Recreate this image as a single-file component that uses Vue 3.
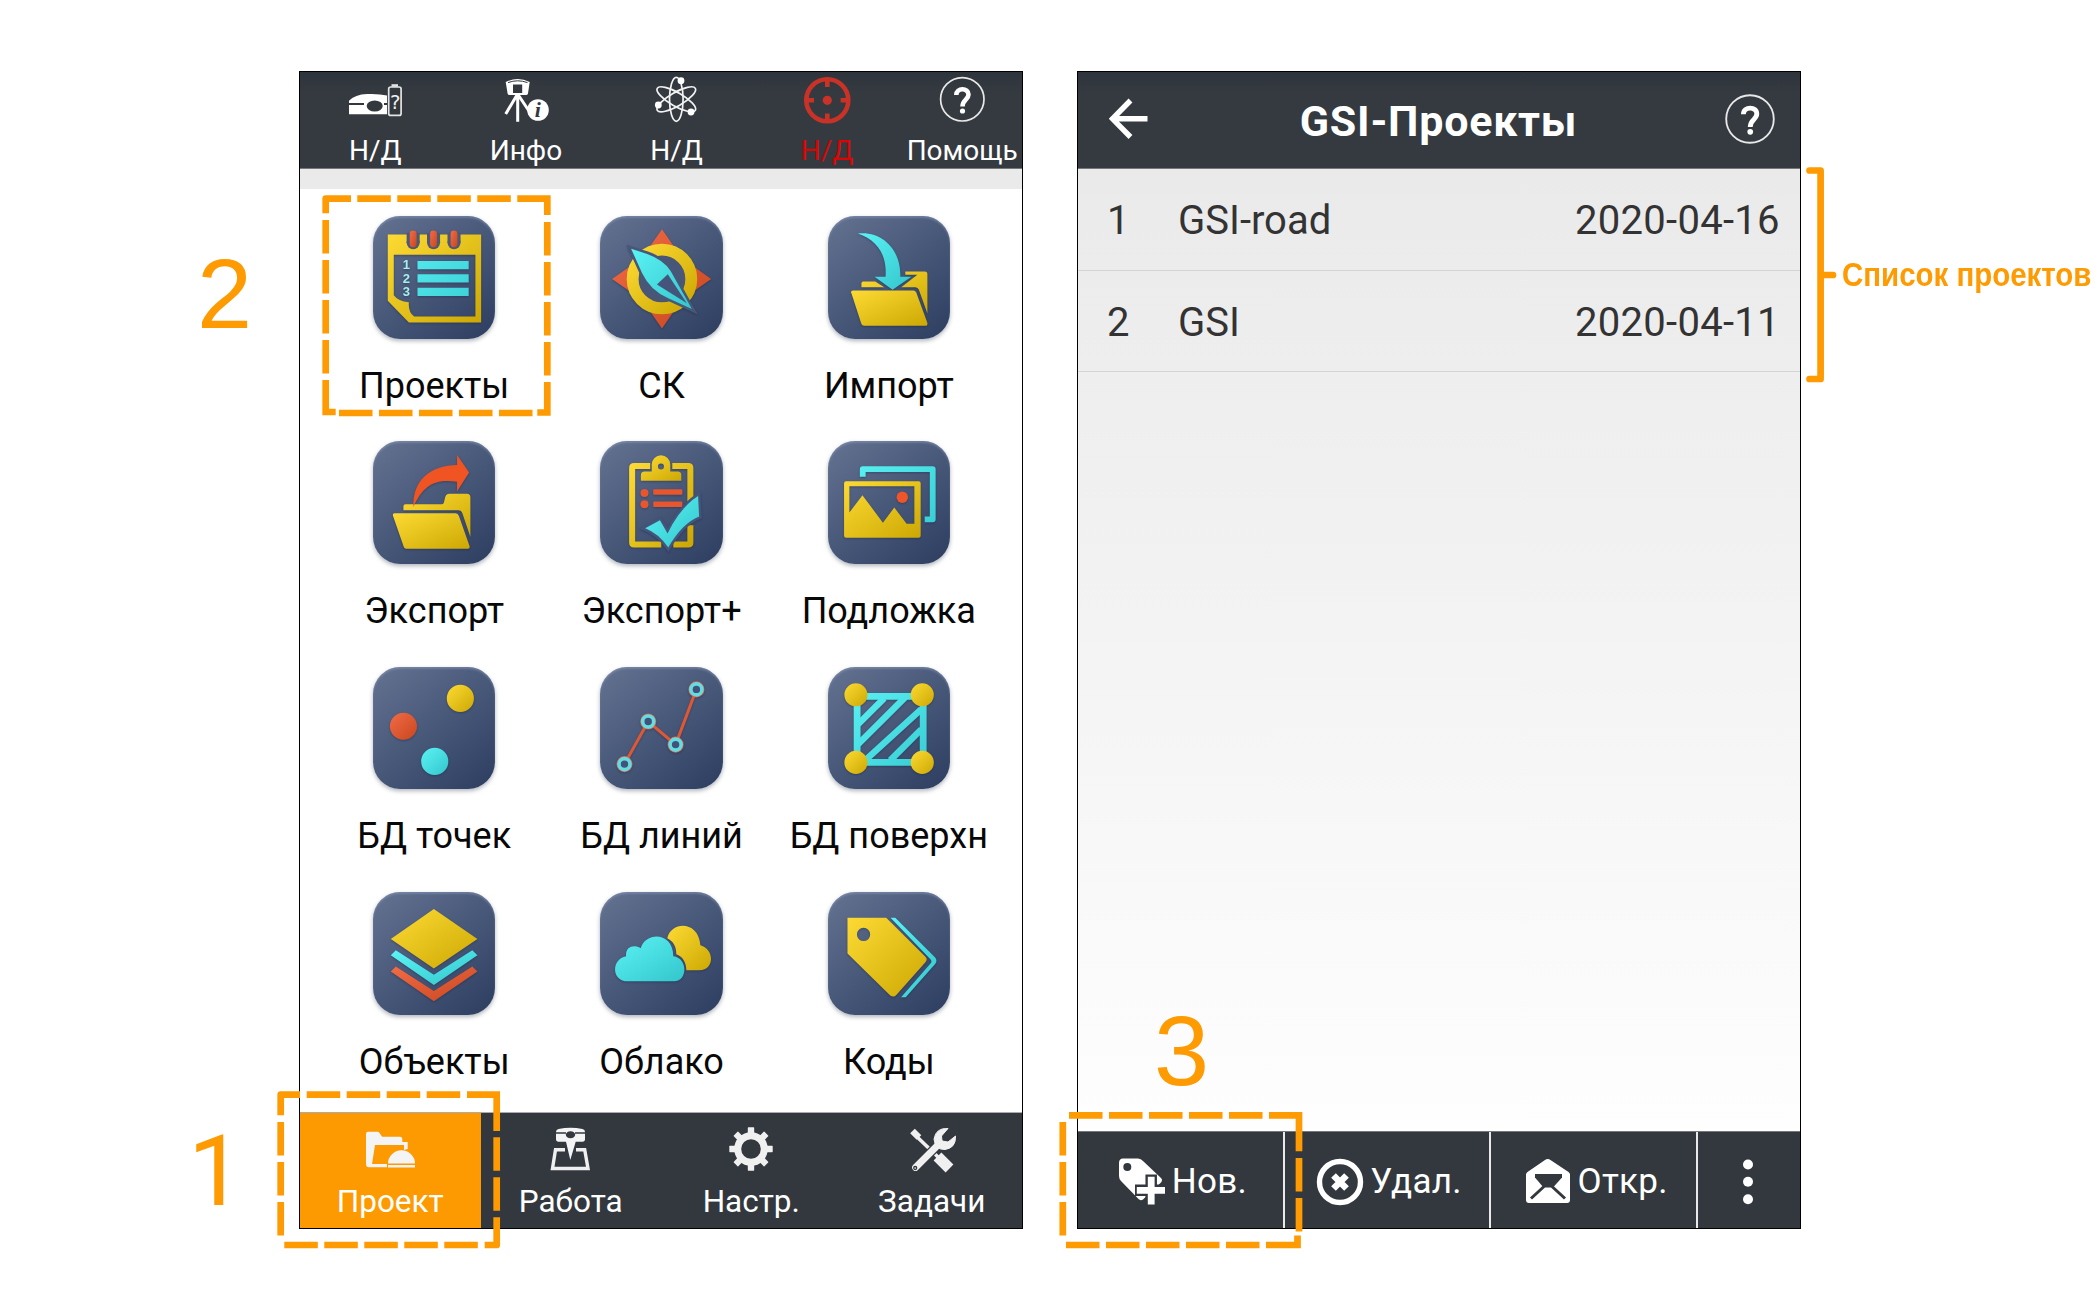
<script setup>
const apps = [
  ['notebook', 'Проекты'], ['compass', 'СК'], ['import', 'Импорт'],
  ['export', 'Экспорт'], ['clipboard', 'Экспорт+'], ['picture', 'Подложка'],
  ['points', 'БД точек'], ['lines', 'БД линий'], ['surface', 'БД поверхн'],
  ['layers', 'Объекты'], ['cloud', 'Облако'], ['tag', 'Коды'],
]
const projects = [
  { n: 1, name: 'GSI-road', date: '2020-04-16' },
  { n: 2, name: 'GSI', date: '2020-04-11' },
]
const teeth = [0, 45, 90, 135, 180, 225, 270, 315]
const nodes = [[24.4, 96.7], [48, 54.3], [75.3, 77.3], [96, 22.3]]

// dashed runs of the highlight frames, then their solid corner pieces
const dashes = [
  'M357.3 198.7H511', 'M547.3 222V375.5', 'M339 413H532.5', 'M325.7 220V373.5',
  'M306.7 1094.7H460.3', 'M496.7 1137.3V1211', 'M284.3 1245H478', 'M280.7 1122V1235.5',
  'M1069 1115.3H1262.5', 'M1299 1158V1231.5', 'M1066 1245H1259.5', 'M1062.8 1122V1235.5',
]
const roundCorners = ['M325.7 213.3V198.7H351', 'M280.7 1115.3V1094.7H300', 'M496.7 1217.3V1245H484.7']
const squareCorners = [
  'M547.3 215V198.7H517.3', 'M547.3 382V412.5H537.3', 'M325.7 380V412H335.7',
  'M467 1094.7H496.7V1131', 'M1269 1115.3H1299V1151.3', 'M1266 1245H1297.5V1235.5',
]
</script>

<template>
  <div class="page">
    <div class="phones">
      <section class="phone">
        <header class="status">
          <div class="stat">
            <svg width="60" height="50" viewBox="0 0 60 50">
              <path d="M4 25.7Q10 19.5 22 19Q34 18.5 42 20.5V39.3H4Z" fill="#fff" />
              <path d="M4 29H19M39 29H42" stroke="#32383e" stroke-width="2" />
              <ellipse cx="29.7" cy="31" rx="8" ry="5.6" fill="#32383e" />
              <rect x="43.7" y="12" width="12.4" height="28.4" rx="2" fill="#32383e" stroke="#e4e4e4" stroke-width="1.7" />
              <path d="M46.5 10.5H53" stroke="#e4e4e4" stroke-width="2.6" />
              <text x="50" y="33.5" class="mono" font-size="20" fill="#eee" text-anchor="middle">?</text>
            </svg>
            <span>Н/Д</span>
          </div>
          <div class="stat">
            <svg width="60" height="50" viewBox="0 0 60 50">
              <path d="M9.7 7Q21.7 1 33.7 7L32 18.5Q31.5 20 30 20H13.5Q12 20 11.6 18.5Z" fill="#fff" />
              <path d="M12 7.6Q21.7 4 31.5 7.6" stroke="#32383e" fill="none" />
              <rect x="17" y="9.5" width="9.2" height="8.5" fill="#32383e" />
              <path d="M21 20L9.7 39M21.7 20V46.7M22.3 20L33 36" stroke="#fff" stroke-width="3" fill="none" />
              <circle cx="42" cy="35" r="10.8" fill="#fff" />
              <text x="41.8" y="42" class="serif" font-size="22" fill="#32383e" text-anchor="middle">i</text>
            </svg>
            <span>Инфо</span>
          </div>
          <div class="stat">
            <svg width="60" height="50" viewBox="0 0 60 50">
              <g fill="none" stroke="#f2f2f2" stroke-width="1.7">
                <ellipse v-for="a in [0, 60, 120]" :key="a" cx="30.3" cy="24.3" rx="6.8" ry="22" :transform="`rotate(${a} 30.3 24.3)`" />
              </g>
              <g fill="#fff"><circle cx="35" cy="5.7" r="3.4" /><circle cx="12.3" cy="30" r="3.4" /><circle cx="45" cy="37" r="3.4" /></g>
            </svg>
            <span>Н/Д</span>
          </div>
          <div class="stat alert">
            <svg width="60" height="50" viewBox="0 0 60 50">
              <g fill="none" stroke="#c93226" stroke-width="4.6">
                <circle cx="30.3" cy="25.3" r="21" />
                <path d="M30.3 4V12M30.3 38.6V47M9 25.3H17M43.6 25.3H52" />
              </g>
              <circle cx="30.3" cy="25.3" r="4.6" fill="#c93226" />
            </svg>
            <span>Н/Д</span>
          </div>
          <div class="stat last">
            <svg width="60" height="50" viewBox="0 0 60 50">
              <circle cx="30.3" cy="24.3" r="21.7" fill="none" stroke="#e8e8e8" stroke-width="1.7" />
              <path d="M24.3 20C24.3 12.5 36.5 12.5 36.5 19.6C36.5 25 30.5 24.5 30.5 31.5" fill="none" stroke="#fff" stroke-width="4.6" />
              <circle cx="30.5" cy="36" r="2.6" fill="#fff" />
            </svg>
            <span>Помощь</span>
          </div>
        </header>
        <div class="strip"></div>

        <main class="grid">
          <div v-for="[icon, label] in apps" :key="icon" class="app">
            <svg class="tile" viewBox="0 0 122 122">
              <defs>
                <linearGradient id="y" x1="0" y1="0" x2="1" y2="1"><stop offset="0" stop-color="#fdda33" /><stop offset="1" stop-color="#cda804" /></linearGradient>
                <linearGradient id="c" x1="0" y1="0" x2="1" y2="1"><stop offset="0" stop-color="#5bf3f5" /><stop offset="1" stop-color="#33c6cc" /></linearGradient>
                <linearGradient id="r" x1="0" y1="0" x2="1" y2="1"><stop offset="0" stop-color="#f26c46" /><stop offset="1" stop-color="#c8461f" /></linearGradient>
                <linearGradient id="cu" gradientUnits="userSpaceOnUse" x1="20" y1="20" x2="100" y2="100"><stop offset="0" stop-color="#5bf3f5" /><stop offset="1" stop-color="#38ccd2" /></linearGradient>
              </defs>
              <g class="glyph">
                <template v-if="icon === 'notebook'">
                  <path fill="url(#y)" fill-rule="evenodd" d="M14.7 18.3H107.7V106H35.7L14.7 84.3ZM20.7 38.7V79Q25 85 35.7 86Q35 96 41 100H102V38.7Z" />
                  <g v-for="x in [40, 60.3, 80.7]" :key="x">
                    <path :d="`M${x} 17V27`" stroke="#4b5979" stroke-width="13" />
                    <circle :cx="x" cy="26.5" r="6.5" fill="#4b5979" />
                    <rect :x="x - 3.4" y="14.5" width="6.8" height="16.5" rx="3.4" fill="url(#r)" />
                  </g>
                  <path d="M44.3 48.9H95.3M44.3 62.2H95.3M44.3 75.5H95.3" stroke="url(#cu)" stroke-width="8.3" />
                  <g class="num" fill="#a5f0ee" font-size="13"><text x="29.6" y="53">1</text><text x="29.6" y="66.8">2</text><text x="29.6" y="80">3</text></g>
                </template>
                <template v-else-if="icon === 'compass'">
                  <path fill="url(#r)" d="M61.7 13.3L77 35H46.4ZM110.7 62.7L89 78V47.4ZM61.7 112L46.4 90H77ZM12 62.7L34 47.4V78Z" />
                  <circle cx="61.7" cy="62.7" r="29.2" fill="#485777" stroke="url(#y)" stroke-width="11.8" />
                  <path d="M31 32.7L47 37.8Q64 44 70.5 55L91.5 92.7L68 82Q50 74 42 57Z" fill="url(#c)" stroke="#485777" stroke-width="5" paint-order="stroke" />
                  <path d="M56.7 68.3L67.5 58L86.5 87Z" fill="#45547a" />
                </template>
                <template v-else-if="icon === 'import'">
                  <path fill="url(#y)" d="M33.3 71V67Q33.3 65.3 35 65.3H47L56 71ZM77 55.3H96.5Q99 55.3 99 58V97L90.5 73.5Q89.5 71 87 71H73L89 58.5H77Z" />
                  <path fill="url(#y)" d="M25 74.3H85Q87 74.3 88 76.5L99 106.5Q99.5 109.3 97 109.3H36Q34 109.3 33.3 107.5L23 76Q22.7 74.3 25 74.3Z" />
                  <path fill="url(#c)" d="M29.7 17.5C52 14.5 73 32 72 60.5H83L64.3 73.5L46.3 60.5H57.3C59 39 49 24 29.7 17.5Z" />
                </template>
                <template v-else-if="icon === 'export'">
                  <path fill="url(#y)" d="M30.3 69V65Q30.3 63 32.3 63H68.5Q70.3 63 70.7 61L72 55.5Q73 52.5 76 52.5H93.5Q97 52.5 97 56V95.5L89 72Q88 69 85 69Z" />
                  <path fill="url(#y)" d="M21.5 72H82.5Q84.5 72 85.5 74.5L96.3 105Q96.5 107.3 94.5 107.3H33Q31.3 107.3 30.7 105.5L19.7 74Q19.5 72 21.5 72Z" />
                  <path fill="#f05423" d="M40.3 65.7C39 40 57 24 83.7 24V14L95.7 31.3L83.7 50.3V40.7C62 37.5 50 44 40.3 65.7Z" />
                </template>
                <template v-else-if="icon === 'clipboard'">
                  <path fill="none" stroke="url(#y)" stroke-width="6" d="M50 25H34Q32 25 32 27V101Q32 103 34 103H61M72 25H88Q90 25 90 27V60M90 84V101Q90 103 88 103H73" />
                  <path fill="url(#y)" fill-rule="evenodd" d="M40.7 39.7V34Q40.7 30.3 44.5 30.3H51.5V23.5A9.2 9.2 0 0 1 70 23.5V30.3H77.5Q81 30.3 81 34V39.7ZM63.7 25.3A3 3 0 1 0 57.7 25.3A3 3 0 1 0 63.7 25.3Z" />
                  <g fill="#e8562e"><circle cx="44.3" cy="51.7" r="4" /><circle cx="44.3" cy="62.9" r="4" /><rect x="53" y="48" width="29" height="5.5" rx="1" /><rect x="53" y="60.2" width="29" height="5.5" rx="1" /></g>
                  <path d="M45 87L59.7 79L67.3 92Q80 66 97.7 54.7L98.7 75.3Q82 82 68 106Q58 92 45 87Z" fill="url(#c)" stroke="#45547a" stroke-width="5" paint-order="stroke" />
                </template>
                <template v-else-if="icon === 'picture'">
                  <path fill="none" stroke="url(#cu)" stroke-width="5.8" stroke-linejoin="round" d="M34.6 35.7V28H104.3V78H96.3" />
                  <path fill="url(#y)" fill-rule="evenodd" d="M18 40H90.3Q92.3 40 92.3 42V94.3Q92.3 96.3 90.3 96.3H18Q16 96.3 16 94.3V42Q16 40 18 40ZM21.3 45V71.3L34.3 54L54.7 81.3L66 66.3L78.3 82.3H86V45Z" />
                  <circle cx="74" cy="56" r="5.7" fill="#ee5528" />
                </template>
                <template v-else-if="icon === 'points'">
                  <circle cx="87" cy="31.3" r="13.5" fill="url(#y)" /><circle cx="30.3" cy="59" r="13.5" fill="url(#r)" /><circle cx="61.5" cy="94" r="13.5" fill="url(#c)" />
                </template>
                <template v-else-if="icon === 'lines'">
                  <path d="M24.4 96.7L48 54.3L75.3 77.3L96 22.3" fill="none" stroke="#df5835" stroke-width="3" />
                  <g v-for="[x, y] in nodes" :key="x">
                    <circle :cx="x" :cy="y" r="8" fill="#d8694e" />
                    <circle :cx="x" :cy="y" r="5.5" fill="#43527a" stroke="#63dde2" stroke-width="3.6" />
                  </g>
                </template>
                <template v-else-if="icon === 'surface'">
                  <path d="M29 29.3H94.8V95H29Z" fill="none" stroke="url(#cu)" stroke-width="6.8" />
                  <path d="M30 57L56 31M30 77L77 30M37 93L93 42M62 93L93 62" stroke="url(#cu)" stroke-width="6.5" />
                  <g fill="url(#y)"><circle cx="27.8" cy="27.7" r="11.5" /><circle cx="93.9" cy="27.7" r="11.5" /><circle cx="27.8" cy="95" r="11.5" /><circle cx="93.9" cy="95" r="11.5" /></g>
                </template>
                <template v-else-if="icon === 'layers'">
                  <path fill="url(#y)" d="M60.6 17L104 46.7L60.6 76.3L17.7 46.7Z" />
                  <path fill="url(#c)" d="M22.7 58L60.6 82.5L98.9 58L104 63L60.6 92.7L17.7 63Z" />
                  <path fill="url(#r)" d="M22.7 74.2L60.6 98.7L98.9 74.2L104 79.2L60.6 108.9L17.7 79.2Z" />
                </template>
                <template v-else-if="icon === 'cloud'">
                  <path fill="url(#y)" d="M67 46C71 29 98 28 100 53C114.5 57 114 78 99 78H86C86 70 82 64 76 62C76 54 73 49 67 46Z" />
                  <path fill="url(#c)" d="M28 89C11 89 11 67 26 64C25 54 34 52 40.5 56C46 39 73 40 73 64C88 66 87 89 74 89Z" />
                </template>
                <template v-else>
                  <path fill="url(#y)" fill-rule="evenodd" d="M19.4 25.7H58L97 64.5Q99.5 67 97 70L68 102.5Q65.5 105.5 62 103L19.4 61.3ZM42 42.3A6.6 6.6 0 1 0 28.8 42.3A6.6 6.6 0 1 0 42 42.3Z" />
                  <path fill="url(#c)" d="M62.3 25.7H67L106.5 65Q109.5 68.5 106.5 72L77.4 104.7H72.8L102.3 71Q103.8 69 102 67Z" />
                </template>
              </g>
            </svg>
            <span>{{ label }}</span>
          </div>
        </main>

        <nav class="tabs">
          <div class="tab active">
            <svg width="60" height="50" viewBox="0 0 60 50" fill="#f4f4f4">
              <path d="M8 6.7H17.5Q18.8 6.7 19.5 8L22.2 11.7H40Q42.3 11.7 42.3 14V17H47.7V24L44 25V20H15L12 39H27V42.3H9Q6 42.3 6 39V9Q6 6.7 8 6.7Z" />
              <path d="M28 38.5A13.5 13.2 0 0 1 55 38.5ZM28 40H55V42.5H28Z" />
            </svg>
            <span>Проект</span>
          </div>
          <div class="tab">
            <svg width="60" height="50" viewBox="0 0 60 50">
              <path d="M24 24.7H14.5L11.5 43.5H47L43.7 24.7H35" fill="none" stroke="#efefef" stroke-width="3.4" />
              <path d="M17.5 4Q29.5 1.5 41.5 4Q44 4.5 44 7V14Q44 16.7 41.5 16.7H34.7L29.3 35L25 16.7H17.5Q15 16.7 15 14V7Q15 4.5 17.5 4Z" fill="#f4f4f4" />
              <path d="M15 8H25M34 8H44" stroke="#32383e" stroke-width="1.5" />
              <ellipse cx="29.5" cy="9.7" rx="4.7" ry="3.5" fill="#32383e" />
            </svg>
            <span>Работа</span>
          </div>
          <div class="tab">
            <svg width="60" height="50" viewBox="0 0 60 50">
              <circle cx="30" cy="24" r="13.3" fill="none" stroke="#f0f0f0" stroke-width="7" />
              <rect v-for="a in teeth" :key="a" x="26.8" y="2.3" width="6.4" height="8" rx=".6" fill="#f0f0f0" :transform="`rotate(${a} 30 24)`" />
            </svg>
            <span>Настр.</span>
          </div>
          <div class="tab">
            <svg width="60" height="50" viewBox="0 0 60 50" fill="none" stroke="#f0f0f0">
              <path d="M11.5 8.5L36 32" stroke-width="3.6" />
              <path d="M10.5 6L17 12.5" stroke-width="6.5" />
              <path d="M35.5 31.5L47.5 43.5" stroke-width="11" />
              <path d="M13 43L38 18" stroke-width="9.5" stroke-linecap="round" stroke="#32383e" />
              <path d="M13.5 42.5L38 18" stroke-width="6.8" stroke-linecap="round" />
              <path d="M46 3.5Q34 2.500 32 14Q33 25 43 24.5Q54 23 53.5 11L46 17L40 16L39.5 11Z" fill="#f0f0f0" stroke-width="1" />
              <circle cx="13.2" cy="43" r="1.5" stroke="#32383e" stroke-width="1.3" />
            </svg>
            <span>Задачи</span>
          </div>
        </nav>
      </section>

      <section class="phone second">
        <header class="titlebar">
          <svg width="40" height="42" viewBox="0 0 40 42"><path d="M21.5 2.5L3.5 20.8L21.5 39M4 20.8H38.5" fill="none" stroke="#fff" stroke-width="5.4" /></svg>
          <h1>GSI-Проекты</h1>
          <svg width="50" height="50" viewBox="7.5 1.5 45.6 45.6">
            <circle cx="30.3" cy="24.3" r="21.7" fill="none" stroke="#e8e8e8" stroke-width="1.7" />
            <path d="M24.3 20C24.3 12.5 36.5 12.5 36.5 19.6C36.5 25 30.5 24.5 30.5 31.5" fill="none" stroke="#fff" stroke-width="4.4" />
            <circle cx="30.5" cy="36" r="2.6" fill="#fff" />
          </svg>
        </header>
        <main class="list">
          <div v-for="p in projects" :key="p.n" class="row">
            <span class="n">{{ p.n }}</span><span class="name">{{ p.name }}</span><span class="date">{{ p.date }}</span>
          </div>
        </main>
        <footer class="actions">
          <div class="action">
            <svg width="48" height="48" viewBox="0 0 48 48">
              <path d="M5 .5H20Q23 .5 25 3L43 20Q45 22 43 24.5L25 41.5Q22.5 43 20.5 41L3 23Q1 21 1 18V5Q1 .5 5 .5Z" fill="#fff" />
              <circle cx="9.3" cy="9" r="4" fill="#32383e" />
              <path d="M33.2 16.5V48M17 32.3H48" stroke="#32383e" stroke-width="11.5" />
              <path d="M33.2 18.8V46.5M18.8 32.3H47" stroke="#fff" stroke-width="6.8" />
            </svg>
            <span>Нов.</span>
          </div>
          <div class="action">
            <svg width="48" height="48" viewBox="0 0 48 48" fill="none" stroke="#fff">
              <circle cx="24" cy="24" r="20.5" stroke-width="5.4" />
              <path d="M17.5 17.5L30.5 30.5M30.5 17.5L17.5 30.5" stroke-width="6.6" />
            </svg>
            <span>Удал.</span>
          </div>
          <div class="action">
            <svg width="48" height="48" viewBox="0 0 48 48">
              <path d="M2 16.5Q2 15 3.5 14L21 2Q23.8 0 26.5 2L44.5 14Q46 15 46 16.5V42Q46 45 43 45H5Q2 45 2 42Z" fill="#fff" />
              <path d="M11 16H38V19.500L29 29.5H19.500L11 19.500Z" fill="#32383e" />
              <path d="M20 28.5L7 40.5M28 28.5L41 40.5" stroke="#32383e" stroke-width="3" />
            </svg>
            <span>Откр.</span>
          </div>
          <div class="action more">
            <svg width="12" height="48" viewBox="0 0 12 48" fill="#fff"><circle cx="6" cy="6.5" r="5" /><circle cx="6" cy="23.8" r="5" /><circle cx="6" cy="41.2" r="5" /></svg>
          </div>
        </footer>
      </section>
    </div>

    <svg class="marks" width="2100" height="1300" viewBox="0 0 2100 1300" fill="none" stroke="#fe9a02" stroke-width="6.7">
      <path v-for="d in dashes" :key="d" :d="d" stroke-dasharray="33.5 6.5" />
      <path v-for="d in roundCorners" :key="d" :d="d" stroke-linejoin="round" />
      <path v-for="d in squareCorners" :key="d" :d="d" />
      <path d="M1809.5 170.5H1820.6V379H1809.5M1820.6 275H1833" stroke-linecap="round" stroke-linejoin="round" />
    </svg>
    <div class="step one">1</div>
    <div class="step two">2</div>
    <div class="step three">3</div>
    <div class="note">Список проектов</div>
  </div>
</template>

<style>
body { margin: 0; background: #fff; }
</style>

<style scoped>
.page { position: relative; width: 2100px; height: 1300px; overflow: hidden; box-sizing: border-box; padding: 71px 0 0 299px; background: #fff; font-family: Roboto, sans-serif; }
.phones { display: flex; gap: 54px; }
.phone { width: 724px; height: 1158px; box-sizing: border-box; border: 1px solid #000; display: flex; flex-direction: column; background: #fff; overflow: hidden; }
svg { display: block; flex: none; }
.mono { font-family: "DejaVu Sans Mono", monospace; }
.serif { font-family: "Liberation Serif", serif; font-weight: 700; font-style: italic; }
.num { font-family: "Liberation Sans", sans-serif; font-weight: 700; }

.status { display: flex; height: 97px; box-sizing: border-box; background: linear-gradient(#2e343b, #343a40 20px); border-bottom: 1px solid #77777a; }
.stat { width: 150.6px; padding-top: 3px; display: flex; flex-direction: column; align-items: center; color: #fff; font-size: 28px; line-height: 32px; white-space: nowrap; }
.stat.last { width: 119.6px; }
.stat span { margin-top: 10px; }
.alert { color: #d90606; }
.strip { height: 19.5px; background: #eaeaea; flex: none; }

.grid { flex: 1; display: grid; grid-template-columns: repeat(3, 227.3px); grid-auto-rows: 225.4px; justify-content: center; padding: 27.5px 0 0 1px; min-height: 0; }
.app { display: flex; flex-direction: column; align-items: center; font-size: 36px; line-height: 42px; color: #080808; white-space: nowrap; }
.app span { margin-top: 26px; }
.tile { width: 122.5px; height: 122.5px; border-radius: 27px; background: linear-gradient(140deg, #62708f 5%, #485879 50%, #304063 95%); box-shadow: 0 2px 4px rgba(30, 40, 60, .35), inset 0 2px 2px rgba(150, 165, 195, .4); }
.glyph { filter: drop-shadow(0 1px 1px rgba(20, 30, 55, .35)); }

.tabs { display: flex; height: 116.5px; box-sizing: border-box; background: #32383e; border-top: 1px solid #a9abad; flex: none; }
.tab { flex: 1; display: flex; flex-direction: column; align-items: center; padding-top: 12.5px; font-size: 31.5px; line-height: 36px; color: #fff; }
.tab.active { background: #fd9a02; }
.tab span { margin-top: 9px; }

.second { background: linear-gradient(#eaeaea 96px, #f2f2f2 500px, #fefefe 1060px); }
.titlebar { height: 97px; box-sizing: border-box; display: flex; align-items: center; justify-content: space-between; padding: 0 25px 2px 31px; background: linear-gradient(#2e343b, #343a40 20px); border-bottom: 1px solid #77777a; }
h1 { margin: 4px 0 0 3px; color: #fff; font-size: 43px; line-height: 50px; font-weight: 700; letter-spacing: .75px; white-space: nowrap; }
.list { flex: 1; }
.row { height: 101.7px; box-sizing: border-box; border-bottom: 1.5px solid #d4d4d4; display: flex; align-items: center; color: #333; font-size: 40px; line-height: 47px; padding-top: 3px; }
.n { width: 71px; padding-left: 29px; box-sizing: content-box; }
.date { margin-left: auto; width: 225px; letter-spacing: .28px; white-space: nowrap; }
.actions { display: flex; height: 97px; box-sizing: border-box; background: #32383e; border-top: 1px solid #777; flex: none; }
.action { width: 206.7px; box-sizing: border-box; border-right: 2px solid #e9e9e9; display: flex; align-items: center; justify-content: center; gap: 6px; color: #fff; font-size: 35px; letter-spacing: .3px; line-height: 40px; padding: 3px 0 0 4px; }
.more { flex: 1; border: 0; padding: 3px 2px 0 0; }

.marks { position: absolute; left: 0; top: 0; }
.step { position: absolute; color: #fe9a02; font: 99px/116px "Liberation Sans", Arial, sans-serif; }
.one { left: 188px; top: 1113px; font-family: Roboto, sans-serif; }
.two { left: 197px; top: 235.5px; }
.three { left: 1154px; top: 993px; }
.note { position: absolute; left: 1842px; top: 254px; color: #fe9a02; font: 700 34px/40px "Liberation Sans", Arial, sans-serif; white-space: nowrap; transform: scaleX(.866); transform-origin: 0 0; }
</style>
